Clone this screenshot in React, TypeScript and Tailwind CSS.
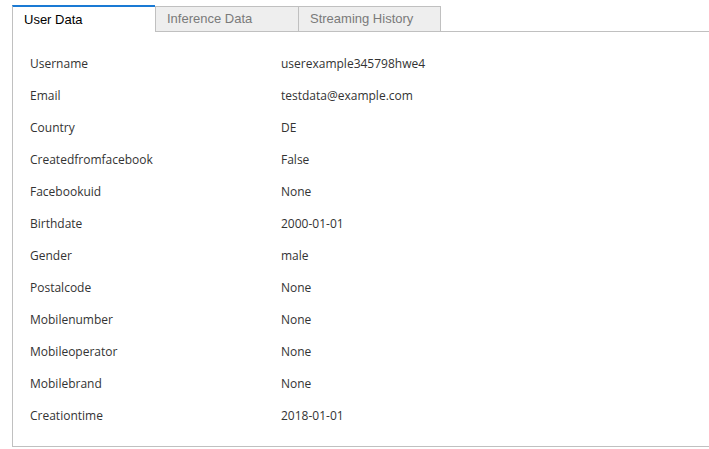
import React from "react";

const rows: [string, string][] = [
  ["Username", "userexample345798hwe4"],
  ["Email", "testdata@example.com"],
  ["Country", "DE"],
  ["Createdfromfacebook", "False"],
  ["Facebookuid", "None"],
  ["Birthdate", "2000-01-01"],
  ["Gender", "male"],
  ["Postalcode", "None"],
  ["Mobilenumber", "None"],
  ["Mobileoperator", "None"],
  ["Mobilebrand", "None"],
  ["Creationtime", "2018-01-01"],
];

export default function App() {
  return (
    <div className="w-[709px] h-[449px] bg-white overflow-hidden pl-[12px] pt-[5px]">
      <div className="flex items-end border-b border-[#c0c0c0] h-[27px] font-['Liberation_Sans',Arial,sans-serif] text-[13px]">
        <div className="w-[143px] h-[27px] -mb-px bg-white border-t-2 border-l border-t-[#1a7ad4] border-l-[#c0c0c0] pl-[11px] pt-[4px] text-black leading-[17px]">
          User Data
        </div>
        <div className="w-[143px] h-[25px] bg-[#eeeeee] border-t border-l border-[#c0c0c0] pl-[11px] pt-[3px] text-[#7a7a7a] leading-[17px]">
          Inference Data
        </div>
        <div className="w-[143px] h-[25px] bg-[#eeeeee] border-t border-l border-r border-[#c0c0c0] pl-[11px] pt-[3px] text-[#7a7a7a] leading-[17px]">
          Streaming History
        </div>
      </div>
      <div className="w-[720px] h-[415px] border-l border-b border-[#c0c0c0] pt-[16px] pl-[17px] font-['Open_Sans','Noto_Sans',sans-serif] text-[12px] text-[#333333]">
        {rows.map(([k, v]) => (
          <div key={k} className="flex h-[32px] items-center">
            <div className="w-[251px]">{k}</div>
            <div>{v}</div>
          </div>
        ))}
      </div>
    </div>
  );
}
